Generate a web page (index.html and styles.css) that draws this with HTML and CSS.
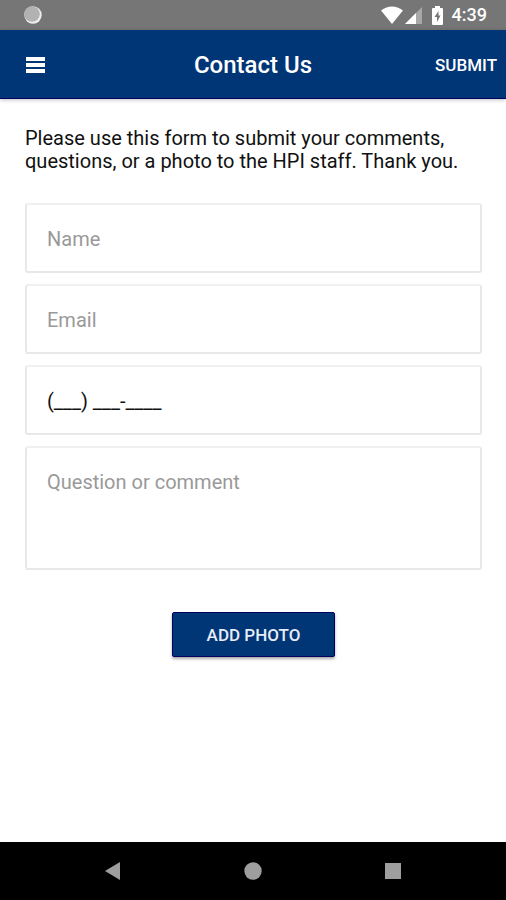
FILE: index.html
```html
<!DOCTYPE html>
<html lang="en">
<head>
<meta charset="utf-8">
<meta name="viewport" content="width=device-width, initial-scale=1">
<title>Contact Us</title>
<link rel="stylesheet" href="styles.css">
</head>
<body>
<div class="status-bar">
  <svg class="status-sync" width="18" height="18" viewBox="0 0 18 18" aria-hidden="true">
    <circle cx="9" cy="9" r="8.700" fill="#eee"/>
    <circle cx="8" cy="8" r="7.800" fill="#b2b2b2"/>
  </svg>
  <div class="status-icons">
    <svg width="22" height="18" viewBox="0 0 22 18" aria-hidden="true">
      <path d="M0 4.500Q11-3.500 22 4.500L11 18z" fill="#fff"/>
    </svg>
    <svg class="status-signal" width="17" height="17" viewBox="0 0 17 17" aria-hidden="true">
      <path d="M17 0V17H0z" fill="#a8a8a8"/>
      <path d="M11 6V17H0z" fill="#fff"/>
    </svg>
    <svg class="status-battery" width="11" height="19" viewBox="0 0 11 19" aria-hidden="true">
      <path d="M3 0H8V2H10Q11 2 11 3V18Q11 19 10 19H1Q0 19 0 18V3Q0 2 1 2H3z" fill="#fff"/>
      <path d="M6.500 5L2.500 11H5V16L8.500 9.500H6.500z" fill="#767676"/>
    </svg>
    <time class="status-time">4:39</time>
  </div>
</div>
<header class="app-bar">
  <button class="menu-button" type="button" aria-label="Menu">
    <svg width="19" height="16" viewBox="0 0 19 16" aria-hidden="true">
      <path d="M0 0H19V4H0zM0 6H19V10H0zM0 12H19V16H0z" fill="#fff"/>
    </svg>
  </button>
  <h1 class="title">Contact Us</h1>
  <button class="submit-button" type="submit" form="contact">SUBMIT</button>
</header>
<main class="content">
  <p class="intro">Please use this form to submit your comments, questions, or a photo to the HPI staff. Thank you.</p>
  <form class="contact-form" id="contact">
    <input class="field" type="text" aria-label="Name" placeholder="Name">
    <input class="field" type="email" aria-label="Email" placeholder="Email">
    <input class="field" type="tel" aria-label="Phone" value="(___) ___-____">
    <textarea class="field field-message" aria-label="Question or comment" placeholder="Question or comment"></textarea>
    <button class="photo-button" type="button">ADD PHOTO</button>
  </form>
</main>
<nav class="nav-bar" aria-label="System">
  <button class="nav-button" type="button" aria-label="Back">
    <svg width="18" height="18" viewBox="0 0 18 18" aria-hidden="true"><path d="M16 0V18L1 9z" fill="#9e9e9e"/></svg>
  </button>
  <button class="nav-button" type="button" aria-label="Home">
    <svg width="18" height="18" viewBox="0 0 18 18" aria-hidden="true"><circle cx="9" cy="9" r="8.700" fill="#9e9e9e"/></svg>
  </button>
  <button class="nav-button" type="button" aria-label="Recents">
    <svg width="18" height="18" viewBox="0 0 18 18" aria-hidden="true"><path d="M1 1H17V17H1z" fill="#9e9e9e"/></svg>
  </button>
</nav>
</body>
</html>
```
FILE: styles.css
```css
* {
  box-sizing: border-box;
}

body {
  margin: 0;
  min-height: 100vh;
  display: flex;
  flex-direction: column;
  background: #fff;
  color: #111;
  font-family: Roboto, "Liberation Sans", sans-serif;
  font-size: 20px;
}

button {
  border: 0;
  padding: 0;
  background: none;
  color: inherit;
  font: inherit;
}

svg {
  display: block;
}

.status-bar {
  display: flex;
  align-items: center;
  justify-content: space-between;
  height: 30px;
  padding: 0 19px 0 24px;
  background: #767676;
  color: #fff;
}

.status-icons {
  display: flex;
  align-items: center;
}

.status-signal {
  margin-left: 2px;
}

.status-battery {
  margin-left: 10px;
}

.status-time {
  margin-left: 9px;
  font-size: 18px;
  font-weight: 500;
  line-height: 30px;
}

.app-bar {
  display: grid;
  grid-template-columns: 80px 1fr 80px;
  align-items: center;
  height: 69px;
  padding: 2px 9px 0;
  background: #003576;
  border-bottom: 1px solid #000060;
  box-shadow: 0 1px 4px rgba(0, 0, 0, 0.25);
  color: #fff;
}

.menu-button {
  justify-self: start;
  padding-left: 17px;
}

.title {
  margin: 0;
  font-size: 24px;
  font-weight: 500;
  line-height: 32px;
  text-align: center;
}

.submit-button {
  justify-self: end;
  font-size: 17px;
  font-weight: 500;
}

.content {
  flex: 1;
  padding: 28px 24px 24px 25px;
}

.intro {
  margin: 0 0 30px;
  line-height: 23px;
}

.contact-form {
  display: flex;
  flex-direction: column;
  gap: 11px;
}

.field {
  display: block;
  width: 100%;
  height: 70px;
  margin: 0;
  padding: 2px 20px 0;
  border: 2px solid #e8e8e8;
  border-top-color: #f0f0f0;
  border-radius: 3px;
  background: #fff;
  color: #111;
  font: inherit;
  outline: 0;
}

.field::placeholder {
  color: #999;
  opacity: 1;
}

.field-message {
  height: 124px;
  padding: 23px 20px;
  line-height: 23px;
  resize: none;
}

.photo-button {
  align-self: center;
  width: 163px;
  height: 45px;
  margin-top: 31px;
  border: 1px solid #000060;
  border-radius: 2px;
  background: #003576;
  box-shadow: 0 2px 3px rgba(0, 0, 0, 0.35);
  color: #e6ecf8;
  font-size: 17px;
  font-weight: 500;
}

.nav-bar {
  display: flex;
  justify-content: center;
  gap: 40px;
  height: 58px;
  background: #000;
}

.nav-button {
  display: flex;
  align-items: center;
  justify-content: center;
  width: 100px;
}
```
